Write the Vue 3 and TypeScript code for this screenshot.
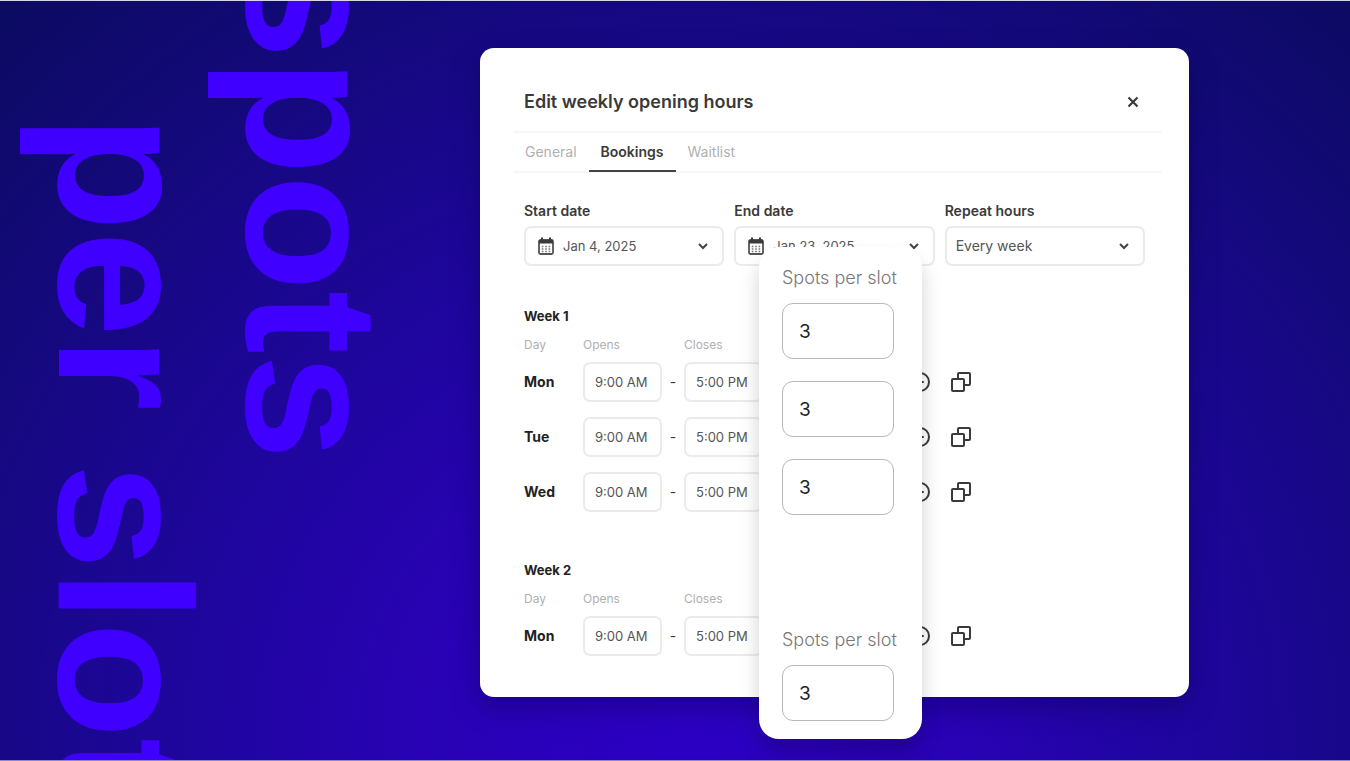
<script setup lang="ts">
import { ref } from 'vue'

interface DayRow {
  day: string
  opens: string
  closes: string
}
interface Week {
  id: string
  title: string
  rows: DayRow[]
}

const tabs = ['General', 'Bookings', 'Waitlist']
const activeTab = ref('Bookings')
const repeat = ref('Every week')

const dates = [
  { id: 'start-date', label: 'Start date', value: 'Jan 4, 2025' },
  { id: 'end-date', label: 'End date', value: 'Jan 23, 2025' },
]

const makeRow = (day: string): DayRow => ({ day, opens: '9:00 AM', closes: '5:00 PM' })
const weeks = ref<Week[]>([
  { id: 'w1', title: 'Week 1', rows: ['Mon', 'Tue', 'Wed'].map(makeRow) },
  { id: 'w2', title: 'Week 2', rows: ['Mon'].map(makeRow) },
])

const spotGroups = ref([
  { id: 'g1', slots: ['3', '3', '3'] },
  { id: 'g2', slots: ['3'] },
])
</script>

<template>
  <main class="stage">
    <div class="banner">
      <p class="headline">
        <span class="line first">spots</span>
        <span class="line second">per slot</span>
      </p>
    </div>

    <section class="card" aria-labelledby="card-title">
      <header class="card-head">
        <h1 id="card-title">Edit weekly opening hours</h1>
        <button class="icon-btn" type="button" aria-label="Close">
          <svg width="12" height="12" viewBox="0 0 12 12"><path d="M1.500 1.500l9 9M10.500 1.500l-9 9" stroke="#3a3a3a" stroke-width="2.200" /></svg>
        </button>
      </header>

      <nav class="tabs">
        <button
          v-for="tab in tabs"
          :key="tab"
          type="button"
          class="tab"
          :class="{ active: tab === activeTab }"
          @click="activeTab = tab"
        >{{ tab }}</button>
      </nav>

      <div class="filters">
        <div v-for="date in dates" :key="date.id" class="field">
          <label :for="date.id">{{ date.label }}</label>
          <button :id="date.id" type="button" class="control">
            <svg width="16" height="18" viewBox="0 0 16 18" fill="none">
              <rect x="1" y="3" width="14" height="14" rx="1.500" stroke="#555" stroke-width="1.800" />
              <path d="M1 3h14v3.600H1zM3 .5h2v3H3zM11 .5h2v3h-2z" fill="#3a3a3a" />
              <path d="M3.800 9.500h9M3.800 12h9M3.800 14.500h9" stroke="#777" stroke-width="1.400" stroke-dasharray="1.600 1.800" />
            </svg>
            <span class="value">{{ date.value }}</span>
            <svg class="chevron" width="10" height="7" viewBox="0 0 10 7" fill="none"><path d="M1 1l4 4 4-4" stroke="#444" stroke-width="2" /></svg>
          </button>
        </div>
        <div class="field">
          <label for="repeat">Repeat hours</label>
          <div class="select-wrap">
            <select id="repeat" v-model="repeat" class="control">
              <option>Every week</option>
            </select>
            <svg class="chevron" width="10" height="7" viewBox="0 0 10 7" fill="none"><path d="M1 1l4 4 4-4" stroke="#444" stroke-width="2" /></svg>
          </div>
        </div>
      </div>

      <section v-for="week in weeks" :key="week.id" class="week">
        <h2>{{ week.title }}</h2>
        <table>
          <thead>
            <tr>
              <th class="c-day" scope="col">Day</th>
              <th class="c-time" scope="col">Opens</th>
              <th class="c-dash"></th>
              <th class="c-time" scope="col">Closes</th>
              <th class="c-actions"></th>
            </tr>
          </thead>
          <tbody>
            <tr v-for="row in week.rows" :key="row.day">
              <th scope="row">{{ row.day }}</th>
              <td><input v-model="row.opens" type="text" class="time" :aria-label="`${row.day} opens`" /></td>
              <td class="dash">-</td>
              <td><input v-model="row.closes" type="text" class="time" :aria-label="`${row.day} closes`" /></td>
              <td>
                <div class="actions">
                  <button class="icon-btn" type="button" aria-label="Remove hours">
                    <svg width="20" height="20" viewBox="0 0 20 20" fill="none" stroke="#3a3a3a" stroke-width="2" stroke-linecap="round"><circle cx="10" cy="10" r="9" /><path d="M7 10h6" /></svg>
                  </button>
                  <button class="icon-btn" type="button" aria-label="Copy hours">
                    <svg width="20" height="20" viewBox="0 0 20 20" fill="none" stroke="#3a3a3a" stroke-width="2" stroke-linejoin="round"><rect x="1" y="7" width="12" height="12" rx="1" /><path d="M7 7V2a1 1 0 0 1 1-1h10a1 1 0 0 1 1 1v10a1 1 0 0 1-1 1h-5" /></svg>
                  </button>
                </div>
              </td>
            </tr>
          </tbody>
        </table>
      </section>

      <aside class="spots">
        <div v-for="group in spotGroups" :key="group.id" class="spot-group">
          <label :for="`${group.id}-0`">Spots per slot</label>
          <input
            v-for="(_, i) in group.slots"
            :id="`${group.id}-${i}`"
            :key="i"
            v-model="group.slots[i]"
            type="text"
            aria-label="Spots per slot"
          />
        </div>
      </aside>
    </section>
  </main>
</template>

<style>
body {
  margin: 0;
}
</style>

<style scoped>
.stage {
  box-sizing: border-box;
  height: 100vh;
  min-height: 760px;
  overflow: hidden;
  display: flex;
  align-items: flex-start;
  border-top: 1px solid #d6d5ea;
  border-bottom: 1px solid #8f88c8;
  background: radial-gradient(ellipse 66% 116% at 51% 98%, #2c00c4 0%, #2802b4 30%, #1e069c 58%, #160882 82%, #0b0b60 115%);
  font-family: Inter, "Open Sans", sans-serif;
  color: #3a3a3a;
}
.banner {
  flex: 0 0 480px;
  height: 100%;
  overflow: hidden;
}
.headline {
  margin: 0;
  width: 407px;
  writing-mode: vertical-rl;
  white-space: nowrap;
  font: 700 190px/188px "Liberation Sans", Arial, sans-serif;
  color: #4000ff;
}
.line {
  display: block;
}
.first {
  margin-top: -48px;
}
.second {
  margin-top: 114px;
}
.card {
  box-sizing: border-box;
  position: relative;
  flex: 1;
  margin: 47px 161px 0 0;
  padding: 32px 28px 34px 33px;
  border-radius: 14px;
  background: #fff;
  box-shadow: 0 10px 28px rgba(10, 0, 70, 0.4);
}
.card-head {
  display: flex;
  align-items: center;
  justify-content: space-between;
  height: 43px;
  padding: 0 22px 8px 11px;
}
h1 {
  margin: 0;
  font-size: 18px;
  line-height: 24px;
  font-weight: 600;
}
.icon-btn {
  display: flex;
  padding: 0;
  border: 0;
  background: none;
}
.tabs {
  display: flex;
  height: 38px;
  border-top: 2px solid #f6f6f6;
  border-bottom: 2px solid #f6f6f6;
}
.tab {
  margin-bottom: -1px;
  padding: 0 12px;
  border: 0;
  border-bottom: 2px solid transparent;
  background: none;
  font: 400 14px/16px Inter, sans-serif;
  color: #b0b0b0;
}
.tab.active {
  border-color: #444;
  font-weight: 600;
  color: #3a3a3a;
}
.filters {
  display: grid;
  grid-template-columns: repeat(3, 1fr);
  gap: 10px;
  padding: 29px 16px 0 11px;
}
.field label {
  display: block;
  margin-bottom: 6px;
  font-size: 14px;
  line-height: 18px;
  font-weight: 600;
}
.control {
  box-sizing: border-box;
  display: flex;
  align-items: center;
  gap: 9px;
  width: 100%;
  height: 40px;
  padding: 0 14px 0 12px;
  border: 2px solid #ebebeb;
  border-radius: 7px;
  background: #fff;
  appearance: none;
  font: 400 13px/18px Inter, sans-serif;
  color: #555;
}
select.control {
  padding-left: 9px;
  font-size: 14px;
}
.value {
  flex: 1;
  text-align: left;
}
.select-wrap {
  position: relative;
}
.select-wrap .chevron {
  position: absolute;
  top: 17px;
  right: 16px;
}
.week {
  padding: 41px 0 0 11px;
}
.week + .week {
  padding-top: 42px;
}
h2 {
  margin: 0 0 11px;
  font-size: 13px;
  line-height: 18px;
  font-weight: 700;
  color: #222;
}
table {
  border-collapse: collapse;
  table-layout: fixed;
  width: 447px;
}
th,
td {
  padding: 0;
  text-align: left;
}
thead th {
  height: 18px;
  font-size: 12px;
  line-height: 18px;
  font-weight: 400;
  color: #b0b0b0;
}
.c-day {
  width: 59px;
}
.c-time {
  width: 79px;
}
.c-dash {
  width: 22px;
}
tbody tr {
  height: 55px;
}
tbody th {
  font-size: 14px;
  font-weight: 700;
  color: #222;
}
.dash {
  text-align: center;
  font-size: 14px;
}
.time {
  box-sizing: border-box;
  display: block;
  width: 79px;
  height: 40px;
  padding: 0 0 0 10px;
  border: 2px solid #ebebeb;
  border-radius: 7px;
  background: #fff;
  font: 400 13px/18px Inter, sans-serif;
  color: #555;
}
.actions {
  display: flex;
  justify-content: flex-end;
  gap: 21px;
}
.spots {
  box-sizing: border-box;
  position: absolute;
  top: 199px;
  left: 279px;
  width: 163px;
  height: 492px;
  padding: 20px 28px 18px 23px;
  display: flex;
  flex-direction: column;
  justify-content: space-between;
  border-radius: 20px;
  background: #fff;
  box-shadow: 0 14px 20px rgba(0, 0, 0, 0.18);
}
.spot-group {
  display: flex;
  flex-direction: column;
  gap: 22px;
}
.spot-group label {
  margin-bottom: -8px;
  font-size: 18px;
  line-height: 22px;
  font-weight: 300;
  white-space: nowrap;
  color: #777;
}
.spot-group input {
  box-sizing: border-box;
  width: 112px;
  height: 56px;
  padding: 0 16px;
  border: 1px solid #b8b8b8;
  border-radius: 11px;
  background: #fff;
  font: 400 19px/24px Inter, sans-serif;
  color: #222;
}
</style>
